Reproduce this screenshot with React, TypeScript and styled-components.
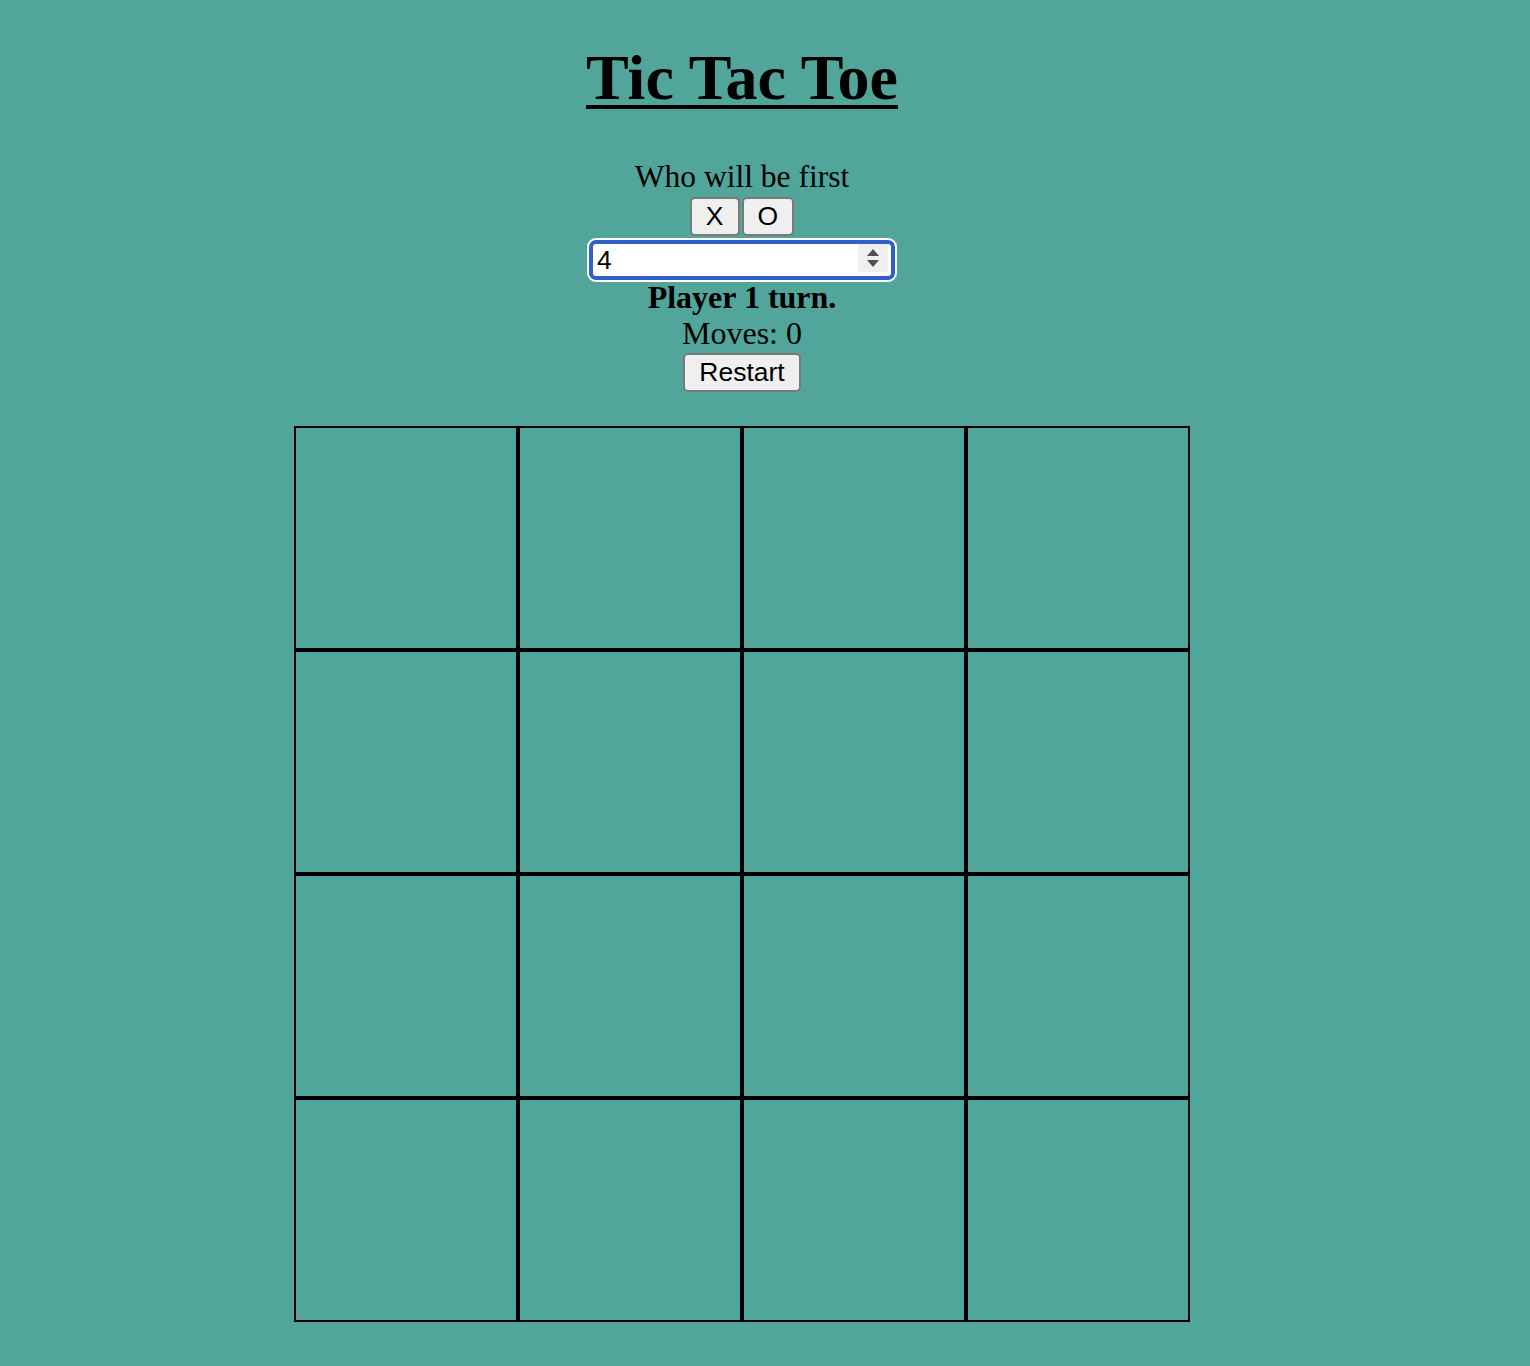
import { useState } from 'react';
import styled, { createGlobalStyle } from 'styled-components';

const GlobalStyle = createGlobalStyle`
  html, body {
    margin: 0;
    padding: 0;
    background: #52a59b;
  }

  body {
    font-family: 'Liberation Serif', 'Times New Roman', serif;
    color: #000;
  }
`;

const Page = styled.div`
  width: 1484px;
  min-height: 1366px;
  display: flex;
  flex-direction: column;
  align-items: center;
`;

const Title = styled.h1`
  margin: 42px 0 0;
  font-size: 64px;
  line-height: 72px;
  font-weight: 700;
  text-decoration: underline;
  text-decoration-thickness: 4px;
  text-underline-offset: 6px;
`;

const Prompt = styled.div`
  margin-top: 46px;
  font-size: 31.5px;
  line-height: 34px;
`;

const ChoiceRow = styled.div`
  display: flex;
  gap: 2px;
  margin-top: 3px;
`;

const Button = styled.button`
  font-family: 'Liberation Sans', Arial, sans-serif;
  font-size: 26.5px;
  line-height: 31px;
  padding: 2px 14px;
  border: 2px solid #7a7a7a;
  border-radius: 5px;
  background: #efefef;
  color: #000;
  cursor: pointer;
`;

const InputWrap = styled.div`
  position: relative;
  margin-top: 4px;
`;

const SizeInput = styled.input`
  display: block;
  box-sizing: border-box;
  width: 306px;
  height: 40px;
  padding: 0 4px;
  font-family: 'Liberation Sans', Arial, sans-serif;
  font-size: 26.5px;
  color: #000;
  background: #fff;
  border: 4px solid #2f5fc9;
  border-radius: 7px;
  box-shadow: 0 0 0 2px #fff;
  outline: none;
  caret-color: #000;
  -moz-appearance: textfield;

  &::-webkit-inner-spin-button,
  &::-webkit-outer-spin-button {
    -webkit-appearance: none;
    margin: 0;
  }
`;

const Spinner = styled.span`
  position: absolute;
  top: 4px;
  right: 7px;
  width: 30px;
  height: 28px;
  background: #efefef;
  display: flex;
  flex-direction: column;
  align-items: center;
  justify-content: center;
  gap: 4px;
  pointer-events: none;
`;

const Arrow = styled.span<{ $down?: boolean }>`
  width: 0;
  height: 0;
  border-left: 6px solid transparent;
  border-right: 6px solid transparent;
  ${({ $down }) =>
    $down ? 'border-top: 7px solid #505050;' : 'border-bottom: 7px solid #505050;'}
`;

const Status = styled.div`
  margin-top: 2px;
  font-size: 32px;
  line-height: 30px;
  font-weight: 700;
`;

const Moves = styled.div`
  margin-top: 3px;
  font-size: 32px;
  line-height: 36px;
`;

const RestartButton = styled(Button)`
  margin-top: 2px;
`;

const Board = styled.div<{ $size: number }>`
  margin-top: 34px;
  display: grid;
  grid-template-columns: repeat(${({ $size }) => $size}, 224px);
  grid-auto-rows: 224px;
`;

const Cell = styled.div`
  box-sizing: border-box;
  border: 2px solid #000;
  display: flex;
  align-items: center;
  justify-content: center;
  font-size: 120px;
  cursor: pointer;
`;

export default function App() {
  const [size, setSize] = useState(4);
  const [cells, setCells] = useState<string[]>(Array(16).fill(''));
  const [first, setFirst] = useState('X');
  const [moves, setMoves] = useState(0);

  const restart = () => {
    setCells(Array(size * size).fill(''));
    setMoves(0);
  };

  const changeSize = (value: number) => {
    const n = Math.max(1, Math.min(4, value || 1));
    setSize(n);
    setCells(Array(n * n).fill(''));
    setMoves(0);
  };

  const play = (i: number) => {
    if (cells[i]) return;
    const other = first === 'X' ? 'O' : 'X';
    const mark = moves % 2 === 0 ? first : other;
    const next = cells.slice();
    next[i] = mark;
    setCells(next);
    setMoves(moves + 1);
  };

  return (
    <Page>
      <GlobalStyle />
      <Title>Tic Tac Toe</Title>
      <Prompt>Who will be first</Prompt>
      <ChoiceRow>
        <Button onClick={() => setFirst('X')}>X</Button>
        <Button onClick={() => setFirst('O')}>O</Button>
      </ChoiceRow>
      <InputWrap>
        <SizeInput
          type="number"
          value={size}
          autoFocus
          onChange={(e) => changeSize(parseInt(e.target.value, 10))}
        />
        <Spinner>
          <Arrow />
          <Arrow $down />
        </Spinner>
      </InputWrap>
      <Status>Player {moves % 2 + 1} turn.</Status>
      <Moves>Moves: {moves}</Moves>
      <RestartButton onClick={restart}>Restart</RestartButton>
      <Board $size={size}>
        {cells.map((c, i) => (
          <Cell key={i} onClick={() => play(i)}>
            {c}
          </Cell>
        ))}
      </Board>
    </Page>
  );
}
